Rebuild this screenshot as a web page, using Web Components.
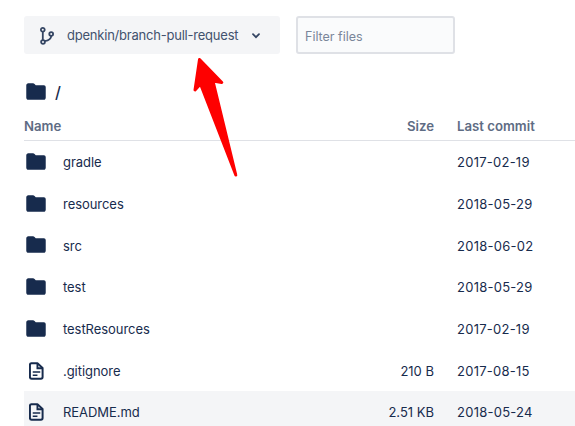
<!DOCTYPE html>
<html>
<head>
<meta charset="utf-8">
<title>Files</title>
<style>
    html, body { margin: 0; background: #fff; }
    body { font-family: Inter, "Liberation Sans", sans-serif; color: #172b4d; height: 426px; overflow: hidden; }
</style>
</head>
<body>
<file-browser></file-browser>
<script>
const FOLDER = `<svg viewBox="0 0 22 18" width="20" height="17" preserveAspectRatio="none" style="margin-top:-1.500px"><path fill="#172b4d" d="M2.500 0.200h5.200c.7 0 1.200.3 1.700.8l1.300 1.500h9c1.200 0 2 .9 2 2v11c0 1.200-.9 2.200-2 2.200H2.500c-1.200 0-2.200-1-2.200-2.200V2.500c0-1.200 1-2.300 2.200-2.300z"/></svg>`;
const FILE = `<svg viewBox="0 0 16 19" width="15" height="18" fill="none" stroke="#172b4d"><path stroke-width="2.100" stroke-linejoin="round" d="M2.500 1.200h6.500l5.500 5v9.800c0 1-.7 1.800-1.800 1.800H2.800c-1 0-1.800-.8-1.800-1.800V2.700c0-.8.700-1.500 1.500-1.500z"/><path stroke-width="2" d="M9 1.500v5h5"/><path stroke-width="1.700" d="M4 10.500h8M4 14h5"/></svg>`;

class RepoSelect extends HTMLElement {
    constructor() {
        super();
        this.attachShadow({ mode: 'open' }).innerHTML = `
            <style>
                :host { display: flex; align-items: center; width: 256px; height: 38px; box-sizing: border-box; padding-left: 16px; background: #f4f5f7; border-radius: 3px; color: #42526e; font-size: 13px; letter-spacing: -.22px; }
                svg.branch { margin-right: 13px; margin-top: 1px; flex: none; }
                svg.chev { margin-left: 14px; margin-top: 1px; flex: none; }
            </style>
            <svg class="branch" viewBox="0 0 14 18" width="14" height="18" fill="none" stroke="#344563" stroke-width="1.800">
                <circle cx="2.800" cy="2.800" r="1.900"/><circle cx="3" cy="15" r="1.900"/><circle cx="11.200" cy="7" r="1.900"/>
                <path d="M2.800 4.700v8.400M11.200 8.900c0 3.600-3.500 4.600-6.600 5.300"/>
            </svg>
            <slot></slot>
            <svg class="chev" viewBox="0 0 8 6" width="8" height="6" fill="none" stroke="#344563" stroke-width="1.800" stroke-linecap="round"><path d="M1 1.200 4 4.200 7 1.200"/></svg>`;
    }
}
customElements.define('repo-select', RepoSelect);

class FilterBox extends HTMLElement {
    constructor() {
        super();
        this.attachShadow({ mode: 'open' }).innerHTML = `
            <style>
                :host { display: block; }
                input { display: block; width: 159px; height: 38px; box-sizing: border-box; padding: 2px 7px 0; background: #fafbfc; border: 2px solid #dfe1e6; border-radius: 3px; font: 12.500px Inter, "Liberation Sans", sans-serif; outline: none; }
                input::placeholder { color: #7a869a; opacity: 1; }
            </style>
            <input placeholder="Filter files">`;
    }
}
customElements.define('filter-box', FilterBox);

class FileRow extends HTMLElement {
    static get observedAttributes() { return ['kind', 'name', 'size', 'date', 'selected']; }

    constructor() {
        super();
        this.attachShadow({ mode: 'open' });
    }

    connectedCallback() { this.render(); }
    attributeChangedCallback() { this.render(); }

    render() {
        const kind = this.getAttribute('kind');
        this.shadowRoot.innerHTML = `
            <style>
                :host { display: grid; grid-template-columns: 1fr 80px 141px; align-items: center; height: 41.670px; font-size: 13px; color: #172b4d; }
                :host([selected]) { background: #f4f5f7; }
                .name { display: flex; align-items: center; letter-spacing: -.05px; }
                .icon { width: 39px; padding-left: ${kind === 'file' ? 5 : 2}px; box-sizing: border-box; display: flex; }
                .size { text-align: right; }
                .date { padding-left: 23px; letter-spacing: .25px; }
            </style>
            <div class="name"><span class="icon">${kind === 'file' ? FILE : FOLDER}</span><span>${this.getAttribute('name')}</span></div>
            <div class="size">${this.getAttribute('size') || ''}</div>
            <div class="date">${this.getAttribute('date')}</div>`;
    }
}
customElements.define('file-row', FileRow);

class FileBrowser extends HTMLElement {
    constructor() {
        super();
        const rows = [
            ['folder', 'gradle', '', '2017-02-19'],
            ['folder', 'resources', '', '2018-05-29'],
            ['folder', 'src', '', '2018-06-02'],
            ['folder', 'test', '', '2018-05-29'],
            ['folder', 'testResources', '', '2017-02-19'],
            ['file', '.gitignore', '210 B', '2017-08-15'],
            ['file', 'README.md', '2.51 KB', '2018-05-24'],
        ];
        this.attachShadow({ mode: 'open' }).innerHTML = `
            <style>
                :host { display: block; position: relative; padding: 16px 0 0 24px; }
                .bar { display: flex; gap: 16px; }
                .crumb { display: flex; align-items: center; height: 24px; margin-top: 26px; padding-left: 2px; gap: 9px; font-size: 16px; font-weight: 500; }
                .head { display: grid; grid-template-columns: 1fr 80px 141px; align-items: center; height: 30.400px; margin-top: 7px; box-sizing: border-box; border-bottom: 1.500px solid #dfe1e6; padding-top: 1px; font-size: 13.200px; font-weight: 600; color: #5e6c84; }
                .head .size { text-align: right; }
                .head .date { padding-left: 23px; }
                .arrow { position: absolute; left: 0; top: 0; pointer-events: none; }
            </style>
            <div class="bar">
                <repo-select>dpenkin/branch-pull-request</repo-select>
                <filter-box></filter-box>
            </div>
            <div class="crumb">${FOLDER}<span>/</span></div>
            <div class="head"><span>Name</span><span class="size">Size</span><span class="date">Last commit</span></div>
            ${rows.map((r, i) => `<file-row kind="${r[0]}" name="${r[1]}" size="${r[2]}" date="${r[3]}"${i === 6 ? ' selected' : ''}></file-row>`).join('')}
            <svg class="arrow" width="575" height="426"><path fill="#fe0000" stroke="#fe0000" stroke-width="3" stroke-linejoin="round" d="M199.500 59.500 221.800 82.500 213 81 235.800 175 200.500 84 195 90z"/></svg>`;
    }
}
customElements.define('file-browser', FileBrowser);
</script>
</body>
</html>
